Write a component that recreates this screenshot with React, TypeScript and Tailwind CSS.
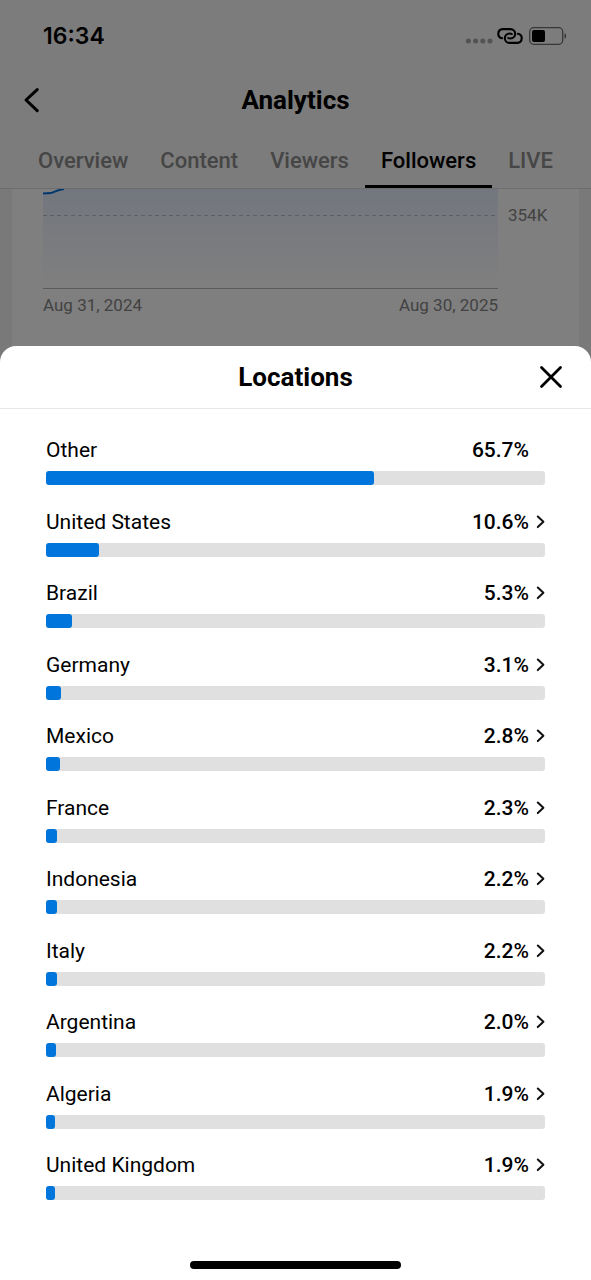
import React from "react";

const tabs = ["Overview", "Content", "Viewers", "Followers", "LIVE"];

const locations = [
  { name: "Other", share: 65.7, drill: false },
  { name: "United States", share: 10.6, drill: true },
  { name: "Brazil", share: 5.3, drill: true },
  { name: "Germany", share: 3.1, drill: true },
  { name: "Mexico", share: 2.8, drill: true },
  { name: "France", share: 2.3, drill: true },
  { name: "Indonesia", share: 2.2, drill: true },
  { name: "Italy", share: 2.2, drill: true },
  { name: "Argentina", share: 2.0, drill: true },
  { name: "Algeria", share: 1.9, drill: true },
  { name: "United Kingdom", share: 1.9, drill: true },
];

function StatusBar() {
  return (
    <div className="flex h-[72px] items-center justify-between pr-6 pl-[43px]">
      <span className="font-[Inter,sans-serif] text-[23px] leading-7 font-semibold">16:34</span>
      <div className="flex items-center gap-1.5">
        <div className="flex items-center gap-1">
          <svg className="h-4 w-7" viewBox="0 0 28 16" fill="#a6a6a6" aria-hidden="true">
            <circle cx="3.4" cy="13" r="2.5" />
            <circle cx="10.6" cy="13" r="2.5" />
            <circle cx="17.8" cy="13" r="2.5" />
            <circle cx="25" cy="13" r="2.5" />
          </svg>
          <svg className="h-4 w-[26px]" viewBox="0 0 26 16" fill="none" stroke="#000" strokeWidth="2.1" strokeLinecap="round" aria-hidden="true">
            <path d="M5 10.2A4.6 4.6 0 0 1 5.6 1.1H13.5A4.7 4.7 0 0 1 13.5 10.5C12.4 10.5 11.8 10.4 11.2 10" />
            <path d="M21 5.8A4.6 4.6 0 0 1 20.4 14.9H12.5A4.7 4.7 0 0 1 12.5 5.5C13.6 5.5 14.2 5.6 14.8 6" />
          </svg>
        </div>
        <svg className="h-[18px] w-[38px]" viewBox="0 0 38 18" aria-hidden="true">
          <rect x="0.7" y="0.7" width="33" height="16.6" rx="4" fill="none" stroke="#6f6f6f" strokeWidth="1.3" />
          <rect x="3" y="3" width="13" height="12" rx="2" fill="#000" />
          <path d="M35.6 6.2c1.9.8 1.9 4.8 0 5.6z" fill="#555" />
        </svg>
      </div>
    </div>
  );
}

function AnalyticsPage() {
  return (
    <div className="col-start-1 row-start-1 bg-[#f3f3f3]">
      <header className="border-b border-[#dadada] bg-[#f8f8f8]">
        <StatusBar />
        <div className="grid h-14 grid-cols-[1fr_auto_1fr] items-center">
          <button type="button" aria-label="Back" className="ml-[22px] flex size-7 items-center">
            <svg className="h-7 w-5" viewBox="0 0 20 28" fill="none" stroke="#000" strokeWidth="3" strokeLinecap="round" strokeLinejoin="round" aria-hidden="true">
              <path d="M15.2 3.6L4 14l11.2 10.6" />
            </svg>
          </button>
          <h1 className="text-[26px] leading-8 font-bold">Analytics</h1>
        </div>
        <nav className="flex h-[60px] justify-center text-[22px] font-medium text-[#8c8c8c]">
          {tabs.map((tab) => (
            <a
              key={tab}
              href="#"
              className={
                tab === "Followers"
                  ? "flex items-center border-b-3 border-black px-4 pt-2 text-black"
                  : "flex items-center border-b-3 border-transparent px-4 pt-2"
              }
            >
              {tab}
            </a>
          ))}
        </nav>
      </header>
      <section className="mx-3 bg-white pr-[21px] pb-24 pl-[31px] text-[17px] text-[#858585]">
        <div className="grid grid-cols-[1fr_50px] gap-x-[10px]">
          <svg className="h-[100px] w-full" viewBox="0 0 455 100" preserveAspectRatio="none" fill="none" aria-hidden="true">
            <defs>
              <linearGradient id="area" x1="0" y1="0" x2="0" y2="1">
                <stop offset="0" stopColor="#e6edfc" />
                <stop offset="1" stopColor="#ffffff" />
              </linearGradient>
            </defs>
            <path d="M0 4.5L8 4C12 3 13 1 20 0H455V99H0Z" fill="url(#area)" />
            <path d="M0 26.5H455" stroke="#bdbfc4" strokeDasharray="4 3" />
            <path d="M0 4.5L8 4C12 3 13 1 21 0" stroke="#0070dd" strokeWidth="1.8" />
            <path d="M0 99.5H455" stroke="#b5b5b5" />
          </svg>
          <span className="pt-3.5 leading-6">354K</span>
          <div className="flex justify-between pt-1 leading-6">
            <span>Aug 31, 2024</span>
            <span>Aug 30, 2025</span>
          </div>
        </div>
      </section>
    </div>
  );
}

function LocationsSheet() {
  return (
    <div role="dialog" aria-labelledby="sheet-title" className="z-10 col-start-1 row-start-1 mt-[346px] flex flex-col rounded-t-2xl bg-white">
      <div className="grid h-[63px] grid-cols-[1fr_auto_1fr] items-center border-b border-[#e8e8e8]">
        <h2 id="sheet-title" className="col-start-2 text-[26px] leading-8 font-bold">Locations</h2>
        <button type="button" aria-label="Close" className="mr-[26px] flex size-7 items-center justify-center justify-self-end">
          <svg className="size-7" viewBox="0 0 28 28" fill="none" stroke="#000" strokeWidth="2.8" strokeLinecap="round" aria-hidden="true">
            <path d="M4.5 4.5l19 19M23.5 4.5l-19 19" />
          </svg>
        </button>
      </div>
      <ul className="flex flex-1 flex-col justify-between gap-4 px-[46px] pt-[27px] pb-[61px]">
        {locations.map((item) => (
          <li key={item.name}>
            <div className="flex h-7 items-center text-[21px] leading-7">
              <span className="flex-1">{item.name}</span>
              <span className="font-medium">{item.share.toFixed(1)}%</span>
              {item.drill ? (
                <button type="button" aria-label={"Show " + item.name} className="flex w-4 justify-end">
                  <svg className="h-4 w-[9px]" viewBox="0 0 9 16" fill="none" stroke="#111" strokeWidth="2" strokeLinecap="round" strokeLinejoin="round" aria-hidden="true">
                    <path d="M1.8 2.5l5.6 5.3-5.6 5.3" />
                  </svg>
                </button>
              ) : (
                <span className="w-4" />
              )}
            </div>
            <div className="mt-[7px] h-3.5 rounded-[3px] bg-[#e0e0e0]">
              <div className="h-full rounded-[3px] bg-[#0075db]" style={{ width: item.share + "%" }} />
            </div>
          </li>
        ))}
      </ul>
      <div className="flex justify-center pb-[11px]">
        <div className="h-2 w-[211px] rounded-full bg-black" />
      </div>
    </div>
  );
}

export default function App() {
  return (
    <main className="grid min-h-screen grid-cols-1 overflow-hidden bg-white font-[Roboto,sans-serif] text-black">
      <AnalyticsPage />
      <div className="col-start-1 row-start-1 bg-black/50" />
      <LocationsSheet />
    </main>
  );
}
